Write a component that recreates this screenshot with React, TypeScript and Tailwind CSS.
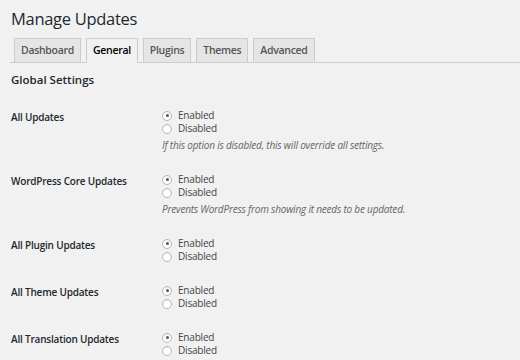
const tabs = ["Dashboard", "General", "Plugins", "Themes", "Advanced"];

const settings: { label: string; note?: string }[] = [
  { label: "All Updates", note: "If this option is disabled, this will override all settings." },
  { label: "WordPress Core Updates", note: "Prevents WordPress from showing it needs to be updated." },
  { label: "All Plugin Updates" },
  { label: "All Theme Updates" },
  { label: "All Translation Updates" },
];

function Radio({ checked, text }: { checked?: boolean; text: string }) {
  return (
    <label className="flex h-[13px] items-center gap-[6px] leading-[13px]">
      <span className="flex h-[10px] w-[10px] items-center justify-center rounded-full border border-[#b4b9be] bg-white shadow-[inset_0_1px_1px_rgba(0,0,0,0.08)]">
        {checked && <span className="h-[3px] w-[3px] rounded-full bg-[#555]" />}
      </span>
      <span>{text}</span>
    </label>
  );
}

export default function App() {
  return (
    <div className="h-[360px] w-[520px] overflow-hidden bg-[#f1f1f1] pt-[7px] text-[#23282d] [font-family:'Open_Sans',sans-serif]">
      <h1 className="pl-[11px] text-[16.5px] leading-[24px] font-normal tracking-[-0.3px]">Manage Updates</h1>
      <nav className="ml-[10px] mt-[7px] flex gap-[5px] border-b border-[#ccc] pl-[4px]">
        {tabs.map(t => (
          <a key={t} className={`-mb-px h-[25px] border border-[#ccc] px-[6px] text-[10.5px] leading-[23px] font-semibold tracking-[-0.3px] ${t === "General" ? "border-b-[#f1f1f1] bg-[#f1f1f1] text-black" : "bg-[#e5e5e5] text-[#555]"}`}>
            {t}
          </a>
        ))}
      </nav>
      <div className="px-[11px]">
        <h2 className="mt-[9px] text-[11.5px] leading-[16px] font-semibold">Global Settings</h2>
        <div className="mt-[10px]">
          {settings.map(s => (
            <div key={s.label} className="flex pt-[11px] pb-[10px]">
              <div className="w-[151px] pt-[2px] text-[10px] leading-[13px] font-semibold tracking-[-0.2px]">{s.label}</div>
              <div className="text-[10px] tracking-[-0.2px] text-[#444]">
                <Radio checked text="Enabled" />
                <Radio text="Disabled" />
                {s.note && <p className="mt-[4px] leading-[13px] italic text-[#666]">{s.note}</p>}
              </div>
            </div>
          ))}
        </div>
      </div>
    </div>
  );
}
